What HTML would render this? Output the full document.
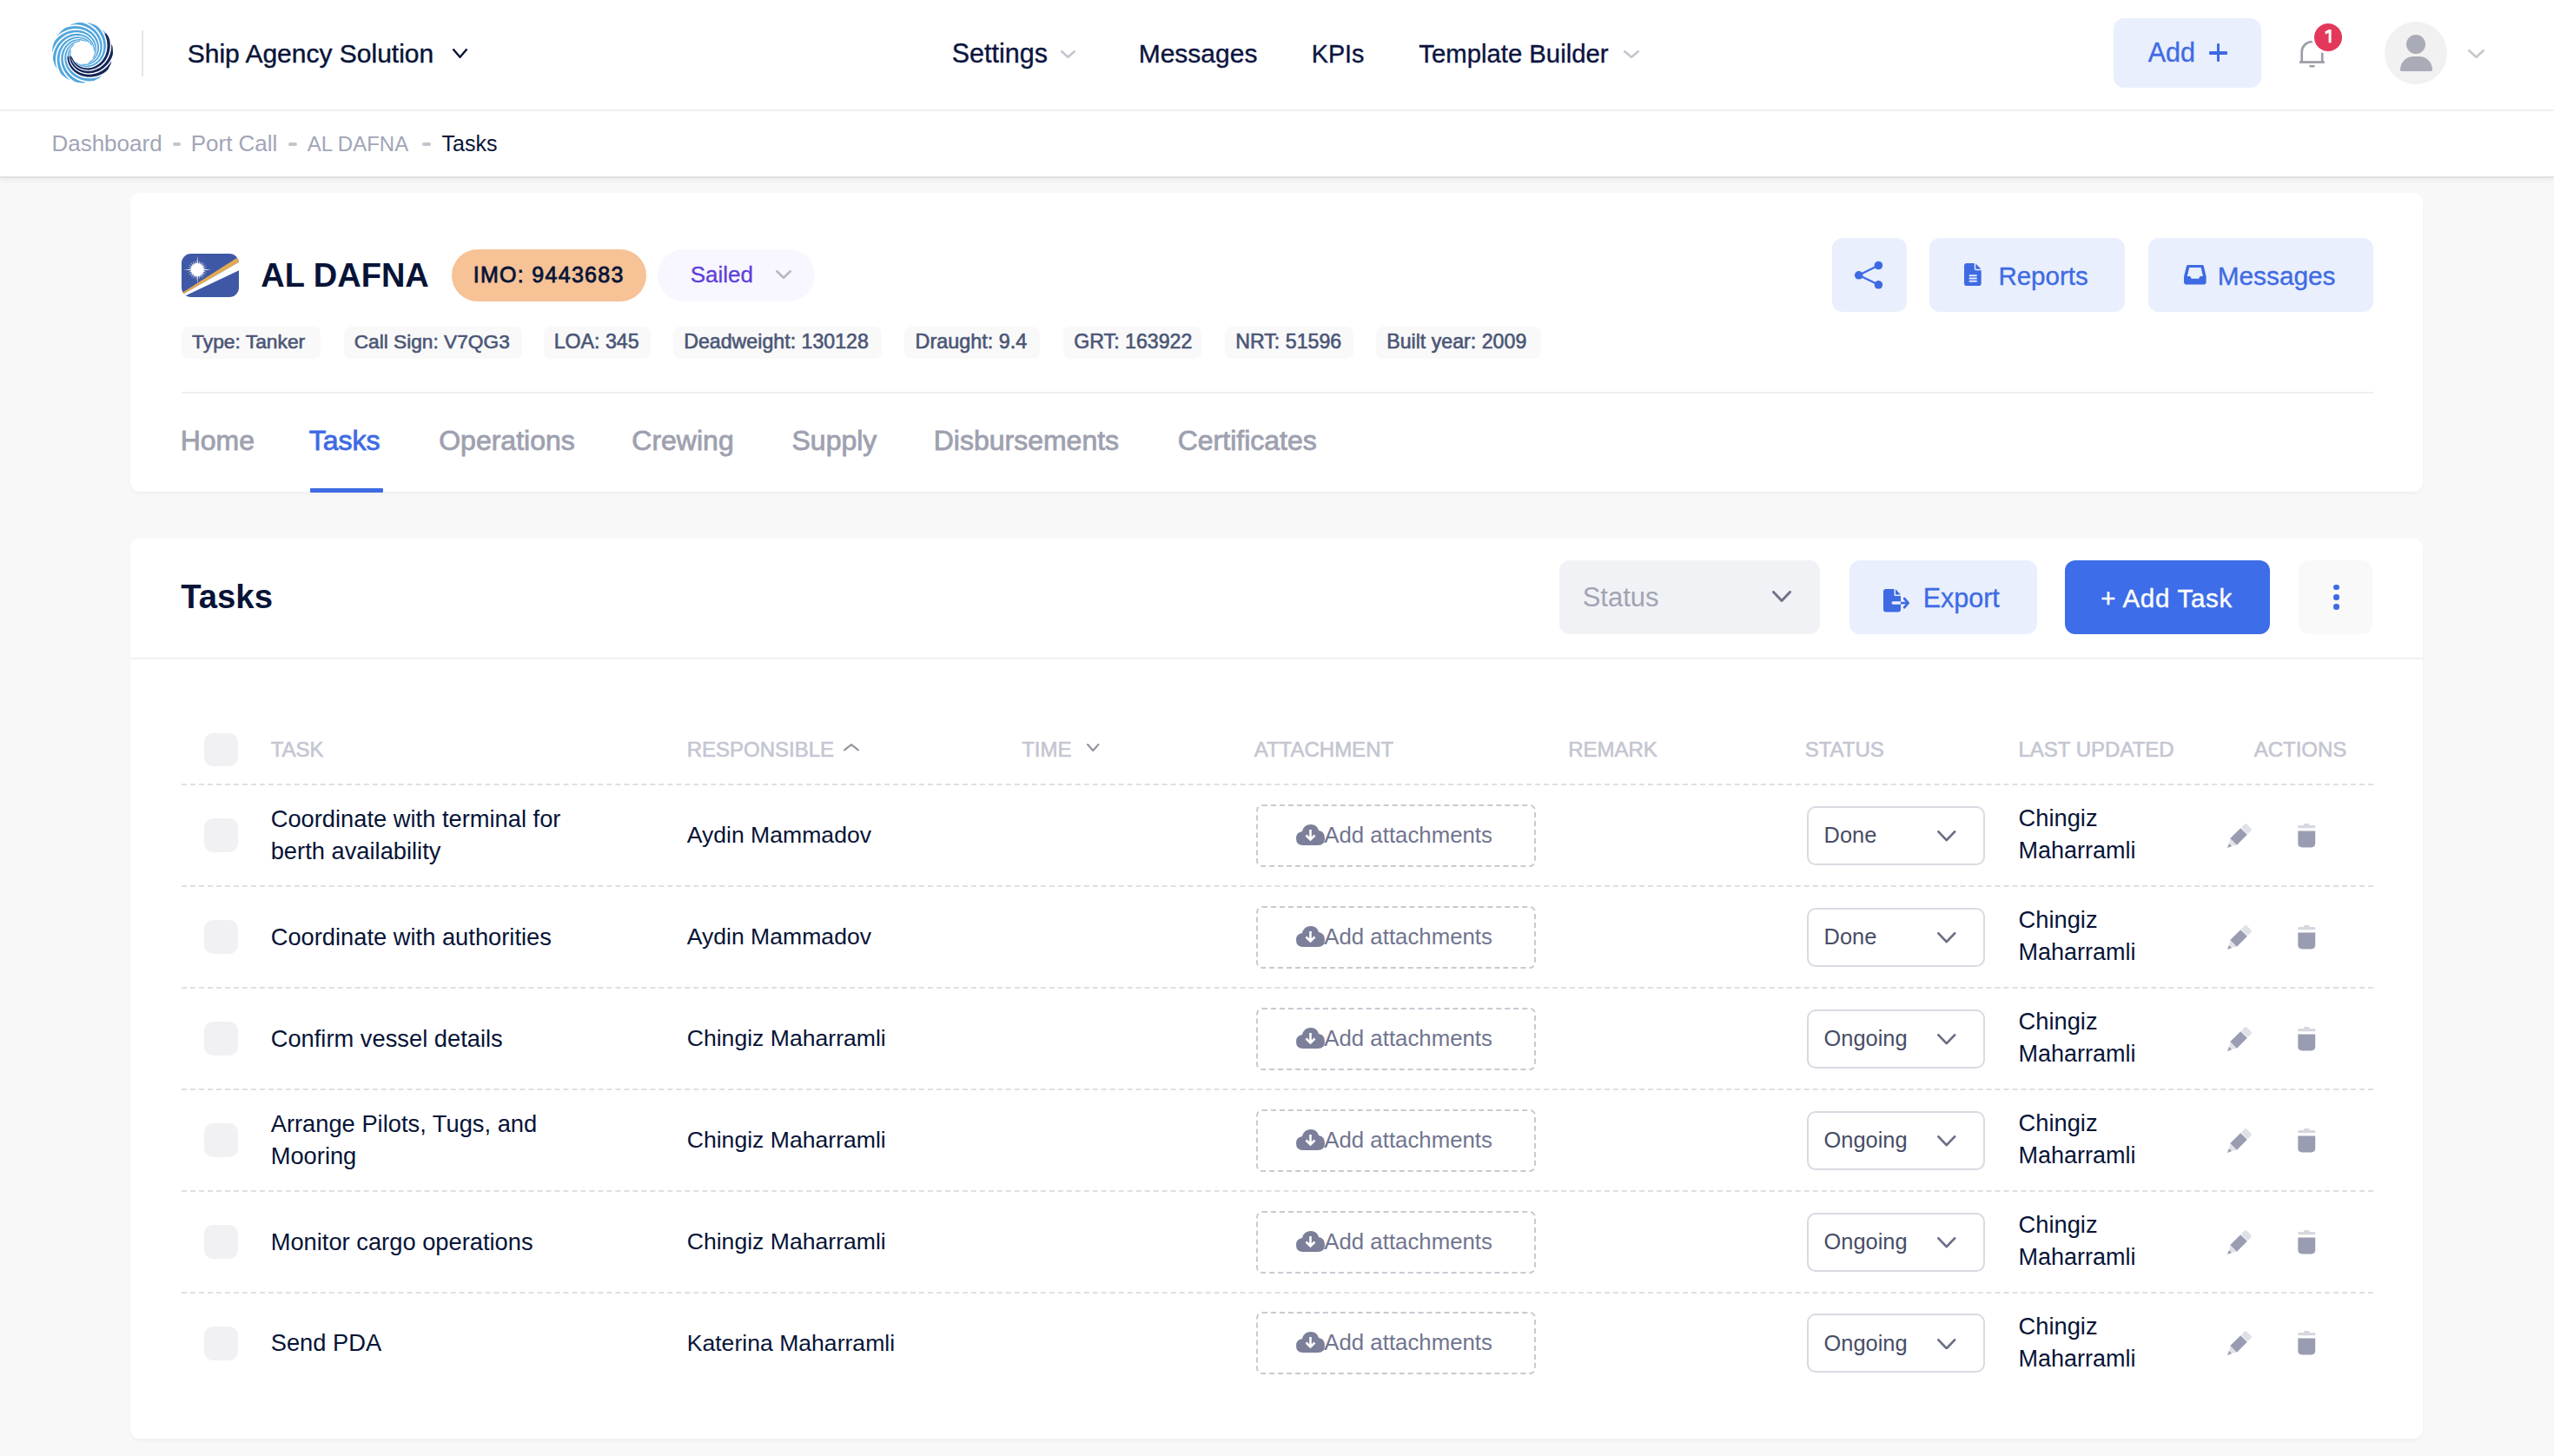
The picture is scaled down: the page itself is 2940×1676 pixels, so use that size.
<!DOCTYPE html><html><head><meta charset="utf-8"><style>
html,body{margin:0;padding:0;}
body{width:2940px;height:1676px;overflow:hidden;position:relative;background:#f8f8f8;font-family:"Liberation Sans",sans-serif;}
.a{position:absolute;box-sizing:border-box;}
.t{position:absolute;white-space:nowrap;line-height:1;}
</style></head><body>
<div class="a" style="left:0.0px;top:0.0px;width:2940.0px;height:127.0px;background:#fff;"></div>
<div class="a" style="left:0.0px;top:126.0px;width:2940.0px;height:2.0px;background:#efeff2;"></div>
<div class="a" style="left:0.0px;top:128.0px;width:2940.0px;height:76.5px;background:#fff;box-shadow:0 3px 6px rgba(0,0,0,0.05);border-bottom:2px solid #dfdfe2;"></div>
<svg class="a" style="left:60.0px;top:25.0px" width="70" height="71" viewBox="0 0 70 71"><defs><clipPath id="lgc"><circle cx="35" cy="35.5" r="35"/></clipPath><clipPath id="lgw"><path d="M35.00,35.50 L80.96,-3.07 L85.22,2.68 L88.77,8.88 L91.56,15.47 L93.54,22.34 L94.69,29.40 L94.99,36.55 L94.44,43.68 L93.04,50.69 L90.83,57.49 L87.81,63.98 L84.05,70.06 L79.59,75.65 L74.50,80.67 L68.84,85.05 L62.70,88.72 L56.18,91.64 L49.35,93.76 L42.31,95.05 L35.17,95.50 L28.03,95.09 L20.99,93.84 L14.15,91.76 L7.61,88.88 L1.45,85.24 L-4.23,80.90 L-9.35,75.91 L-13.85,70.34 L-17.65,64.28 L-20.70,57.81 L-22.96,51.03Z"/></clipPath></defs><g clip-path="url(#lgc)"><path d="M48.15,34.35 L48.05,33.16 L47.91,31.96 L47.71,30.74 L47.43,29.52 L47.05,28.29 L46.59,27.07 L46.01,25.85 L45.33,24.65 L44.53,23.48 L43.62,22.35 L42.59,21.27 L41.44,20.25 L40.18,19.31 L38.80,18.45 L37.30,17.70 L35.71,17.07 L34.02,16.56 L32.24,16.20 L30.38,15.99 L28.46,15.95 L26.49,16.09 L24.49,16.42 L22.47,16.94 L20.45,17.66 L18.46,18.59 L16.51,19.73 L14.62,21.08 L12.81,22.64 L11.12,24.40 L9.56,26.36 L8.14,28.52 L6.91,30.85 L5.87,33.35 L5.04,36.00 L4.45,38.78 L4.11,41.67 L4.04,44.65 L4.26,47.70 L4.76,50.79 L5.57,53.89 L2.52,55.80 L1.61,52.39 L1.03,48.98 L0.78,45.62 L0.84,42.33 L1.20,39.13 L1.83,36.05 L2.73,33.12 L3.87,30.35 L5.23,27.76 L6.78,25.37 L8.50,23.19 L10.38,21.23 L12.37,19.49 L14.46,17.99 L16.62,16.72 L18.83,15.68 L21.07,14.87 L23.32,14.29 L25.54,13.93 L27.73,13.77 L29.86,13.82 L31.93,14.05 L33.91,14.46 L35.79,15.03 L37.56,15.74 L39.21,16.59 L40.74,17.55 L42.14,18.61 L43.40,19.75 L44.53,20.97 L45.52,22.24 L46.38,23.55 L47.11,24.89 L47.71,26.25 L48.19,27.61 L48.56,28.97 L48.83,30.32 L49.00,31.66 L49.10,32.97 L49.15,34.26Z" fill="#52a6dd"/><path d="M46.68,41.64 L47.24,40.58 L47.78,39.50 L48.26,38.37 L48.69,37.19 L49.04,35.95 L49.31,34.67 L49.48,33.34 L49.55,31.96 L49.52,30.54 L49.36,29.10 L49.08,27.63 L48.67,26.15 L48.11,24.67 L47.41,23.21 L46.56,21.77 L45.56,20.37 L44.41,19.04 L43.11,17.77 L41.66,16.59 L40.07,15.52 L38.33,14.57 L36.47,13.76 L34.49,13.11 L32.41,12.63 L30.22,12.33 L27.97,12.24 L25.65,12.35 L23.29,12.69 L20.91,13.25 L18.53,14.06 L16.18,15.11 L13.88,16.40 L11.66,17.94 L9.53,19.72 L7.53,21.74 L5.68,23.99 L4.01,26.47 L2.54,29.14 L1.30,32.02 L0.30,35.06 L-3.30,35.01 L-2.22,31.65 L-0.87,28.48 L0.74,25.51 L2.57,22.77 L4.60,20.28 L6.80,18.03 L9.14,16.05 L11.60,14.33 L14.14,12.89 L16.74,11.72 L19.37,10.82 L22.00,10.18 L24.62,9.80 L27.19,9.66 L29.69,9.76 L32.12,10.09 L34.44,10.62 L36.64,11.34 L38.71,12.24 L40.63,13.29 L42.40,14.48 L44.01,15.80 L45.46,17.21 L46.73,18.70 L47.83,20.26 L48.77,21.87 L49.53,23.50 L50.13,25.15 L50.58,26.79 L50.87,28.43 L51.02,30.03 L51.03,31.60 L50.92,33.12 L50.69,34.59 L50.36,36.00 L49.94,37.34 L49.43,38.62 L48.86,39.84 L48.23,40.99 L47.57,42.11Z" fill="#52a6dd"/><path d="M41.51,46.98 L42.55,46.40 L43.59,45.77 L44.61,45.08 L45.60,44.32 L46.56,43.47 L47.48,42.54 L48.35,41.51 L49.16,40.39 L49.89,39.18 L50.54,37.88 L51.10,36.49 L51.55,35.02 L51.88,33.48 L52.08,31.87 L52.15,30.20 L52.06,28.49 L51.82,26.74 L51.41,24.97 L50.82,23.19 L50.06,21.43 L49.12,19.70 L47.99,18.01 L46.68,16.39 L45.18,14.86 L43.51,13.43 L41.66,12.13 L39.65,10.97 L37.48,9.98 L35.17,9.17 L32.74,8.56 L30.20,8.17 L27.56,8.01 L24.86,8.11 L22.10,8.46 L19.33,9.07 L16.56,9.97 L13.81,11.14 L11.13,12.60 L8.53,14.35 L6.05,16.37 L3.05,14.39 L5.77,12.14 L8.62,10.20 L11.58,8.58 L14.60,7.26 L17.66,6.26 L20.72,5.56 L23.76,5.16 L26.76,5.04 L29.67,5.20 L32.49,5.62 L35.19,6.28 L37.76,7.17 L40.16,8.26 L42.40,9.54 L44.45,10.98 L46.31,12.56 L47.98,14.26 L49.44,16.06 L50.69,17.93 L51.74,19.86 L52.59,21.82 L53.23,23.80 L53.69,25.76 L53.95,27.71 L54.04,29.62 L53.95,31.47 L53.71,33.26 L53.33,34.97 L52.81,36.60 L52.17,38.13 L51.43,39.56 L50.60,40.89 L49.68,42.11 L48.69,43.22 L47.65,44.22 L46.57,45.13 L45.45,45.93 L44.31,46.64 L43.16,47.27 L42.00,47.85Z" fill="#52a6dd"/><path d="M34.27,48.68 L35.46,48.75 L36.67,48.79 L37.90,48.76 L39.15,48.65 L40.42,48.46 L41.70,48.17 L42.98,47.77 L44.27,47.27 L45.54,46.65 L46.79,45.91 L48.01,45.04 L49.18,44.05 L50.29,42.93 L51.34,41.68 L52.29,40.31 L53.15,38.82 L53.89,37.22 L54.50,35.51 L54.97,33.70 L55.28,31.81 L55.42,29.84 L55.38,27.81 L55.15,25.74 L54.73,23.64 L54.09,21.53 L53.24,19.44 L52.17,17.38 L50.89,15.37 L49.38,13.44 L47.66,11.62 L45.73,9.91 L43.60,8.36 L41.28,6.97 L38.77,5.78 L36.10,4.80 L33.29,4.05 L30.34,3.56 L27.30,3.33 L24.17,3.40 L20.99,3.76 L19.53,0.46 L23.04,0.05 L26.49,-0.04 L29.85,0.19 L33.11,0.71 L36.22,1.52 L39.18,2.59 L41.95,3.90 L44.53,5.42 L46.90,7.13 L49.05,9.01 L50.96,11.03 L52.63,13.16 L54.07,15.38 L55.26,17.66 L56.21,19.98 L56.92,22.32 L57.40,24.65 L57.66,26.95 L57.70,29.21 L57.54,31.40 L57.19,33.50 L56.67,35.51 L55.98,37.41 L55.15,39.19 L54.19,40.84 L53.12,42.36 L51.95,43.73 L50.70,44.97 L49.39,46.05 L48.03,47.00 L46.63,47.80 L45.21,48.46 L43.78,48.99 L42.35,49.40 L40.93,49.68 L39.53,49.85 L38.16,49.92 L36.81,49.91 L35.50,49.81 L34.21,49.68Z" fill="#52a6dd"/><path d="M27.26,46.19 L28.22,46.90 L29.22,47.58 L30.27,48.22 L31.38,48.81 L32.55,49.33 L33.79,49.78 L35.08,50.14 L36.43,50.41 L37.84,50.58 L39.29,50.63 L40.78,50.56 L42.31,50.36 L43.85,50.02 L45.40,49.53 L46.94,48.90 L48.47,48.11 L49.96,47.16 L51.40,46.05 L52.77,44.78 L54.05,43.36 L55.24,41.78 L56.30,40.05 L57.23,38.18 L58.01,36.19 L58.61,34.07 L59.03,31.85 L59.24,29.54 L59.25,27.16 L59.02,24.72 L58.57,22.25 L57.86,19.78 L56.91,17.31 L55.70,14.89 L54.24,12.53 L52.53,10.27 L50.56,8.12 L48.35,6.11 L45.91,4.27 L43.25,2.64 L40.37,1.22 L40.93,-2.34 L44.11,-0.79 L47.05,1.00 L49.76,3.01 L52.21,5.21 L54.40,7.58 L56.30,10.07 L57.93,12.67 L59.28,15.35 L60.35,18.07 L61.14,20.81 L61.66,23.54 L61.91,26.24 L61.92,28.88 L61.69,31.44 L61.23,33.91 L60.57,36.26 L59.71,38.48 L58.68,40.56 L57.50,42.48 L56.18,44.23 L54.75,45.82 L53.22,47.22 L51.62,48.45 L49.96,49.50 L48.26,50.37 L46.54,51.07 L44.81,51.59 L43.09,51.95 L41.40,52.16 L39.74,52.22 L38.13,52.13 L36.58,51.92 L35.09,51.60 L33.67,51.16 L32.32,50.64 L31.05,50.02 L29.86,49.34 L28.74,48.60 L27.68,47.81 L26.67,47.00Z" fill="#52a6dd"/><path d="M22.71,40.31 L23.14,41.42 L23.61,42.54 L24.15,43.65 L24.76,44.74 L25.46,45.81 L26.26,46.86 L27.15,47.86 L28.14,48.82 L29.24,49.72 L30.43,50.55 L31.73,51.29 L33.12,51.95 L34.60,52.50 L36.16,52.93 L37.80,53.23 L39.51,53.39 L41.28,53.39 L43.09,53.24 L44.93,52.92 L46.78,52.41 L48.63,51.72 L50.46,50.85 L52.25,49.78 L53.98,48.52 L55.63,47.06 L57.19,45.42 L58.62,43.59 L59.91,41.59 L61.04,39.42 L61.99,37.10 L62.73,34.63 L63.26,32.05 L63.56,29.36 L63.60,26.58 L63.39,23.75 L62.90,20.88 L62.12,17.99 L61.06,15.13 L59.70,12.31 L58.05,9.57 L60.45,6.88 L62.28,9.89 L63.79,12.99 L64.98,16.15 L65.85,19.33 L66.41,22.50 L66.67,25.63 L66.63,28.70 L66.32,31.67 L65.75,34.54 L64.93,37.27 L63.89,39.85 L62.65,42.26 L61.23,44.48 L59.64,46.52 L57.93,48.34 L56.09,49.96 L54.17,51.37 L52.19,52.56 L50.15,53.53 L48.10,54.30 L46.04,54.86 L43.99,55.21 L41.98,55.38 L40.01,55.37 L38.11,55.18 L36.29,54.83 L34.55,54.34 L32.91,53.72 L31.38,52.97 L29.95,52.13 L28.64,51.19 L27.45,50.17 L26.37,49.09 L25.41,47.96 L24.56,46.78 L23.83,45.58 L23.19,44.36 L22.65,43.13 L22.19,41.90 L21.78,40.67Z" fill="#52a6dd"/><path d="M22.06,32.90 L21.82,34.07 L21.61,35.26 L21.46,36.48 L21.39,37.74 L21.40,39.02 L21.51,40.33 L21.72,41.66 L22.03,43.00 L22.47,44.35 L23.02,45.69 L23.71,47.02 L24.52,48.32 L25.47,49.58 L26.56,50.79 L27.77,51.93 L29.13,52.99 L30.61,53.95 L32.21,54.80 L33.94,55.52 L35.77,56.10 L37.70,56.52 L39.71,56.77 L41.79,56.84 L43.93,56.71 L46.11,56.38 L48.30,55.84 L50.49,55.08 L52.66,54.09 L54.79,52.88 L56.84,51.43 L58.80,49.77 L60.64,47.88 L62.35,45.77 L63.88,43.46 L65.23,40.96 L66.37,38.28 L67.28,35.44 L67.94,32.45 L68.32,29.35 L68.42,26.15 L71.88,25.18 L71.80,28.71 L71.39,32.13 L70.69,35.43 L69.70,38.57 L68.46,41.54 L66.98,44.32 L65.29,46.88 L63.42,49.22 L61.39,51.32 L59.22,53.17 L56.95,54.78 L54.61,56.13 L52.20,57.24 L49.78,58.09 L47.34,58.70 L44.93,59.07 L42.55,59.22 L40.24,59.14 L38.00,58.86 L35.85,58.40 L33.82,57.75 L31.90,56.95 L30.12,56.00 L28.48,54.92 L26.98,53.74 L25.63,52.46 L24.44,51.11 L23.40,49.70 L22.51,48.24 L21.77,46.76 L21.17,45.26 L20.72,43.76 L20.40,42.27 L20.20,40.80 L20.12,39.35 L20.15,37.94 L20.27,36.57 L20.48,35.24 L20.76,33.96 L21.08,32.70Z" fill="#52a6dd"/><path d="M25.52,26.32 L24.68,27.17 L23.87,28.06 L23.08,29.01 L22.34,30.02 L21.66,31.11 L21.04,32.27 L20.50,33.50 L20.04,34.80 L19.67,36.16 L19.42,37.60 L19.27,39.08 L19.25,40.62 L19.37,42.19 L19.63,43.80 L20.04,45.42 L20.60,47.04 L21.33,48.65 L22.22,50.23 L23.28,51.77 L24.51,53.24 L25.91,54.64 L27.46,55.94 L29.18,57.12 L31.05,58.17 L33.06,59.07 L35.19,59.80 L37.45,60.35 L39.81,60.69 L42.25,60.81 L44.76,60.71 L47.31,60.37 L49.88,59.78 L52.45,58.93 L54.99,57.82 L57.48,56.44 L59.89,54.80 L62.19,52.90 L64.35,50.74 L66.36,48.34 L68.17,45.70 L71.61,46.76 L69.63,49.68 L67.43,52.34 L65.06,54.74 L62.53,56.85 L59.88,58.67 L57.14,60.21 L54.33,61.45 L51.49,62.40 L48.65,63.07 L45.82,63.46 L43.05,63.59 L40.34,63.46 L37.72,63.09 L35.22,62.49 L32.84,61.69 L30.61,60.70 L28.53,59.53 L26.62,58.22 L24.89,56.78 L23.34,55.22 L21.98,53.58 L20.80,51.87 L19.81,50.11 L19.01,48.31 L18.39,46.51 L17.95,44.70 L17.68,42.92 L17.56,41.17 L17.60,39.46 L17.78,37.82 L18.09,36.23 L18.52,34.73 L19.05,33.30 L19.69,31.95 L20.40,30.70 L21.19,29.52 L22.03,28.44 L22.93,27.44 L23.86,26.50 L24.80,25.62Z" fill="#52a6dd"/><path d="M31.99,22.65 L30.82,22.92 L29.65,23.22 L28.48,23.60 L27.31,24.05 L26.15,24.59 L25.00,25.23 L23.88,25.97 L22.79,26.82 L21.75,27.77 L20.76,28.84 L19.83,30.01 L18.99,31.29 L18.23,32.68 L17.58,34.17 L17.05,35.75 L16.65,37.42 L16.39,39.17 L16.29,40.98 L16.35,42.85 L16.58,44.76 L17.00,46.68 L17.61,48.62 L18.41,50.54 L19.42,52.44 L20.62,54.28 L22.02,56.05 L23.63,57.73 L25.43,59.29 L27.41,60.72 L29.58,61.98 L31.91,63.08 L34.39,63.97 L37.02,64.64 L39.76,65.08 L42.59,65.27 L45.50,65.19 L48.47,64.84 L51.45,64.19 L54.44,63.25 L57.39,62.01 L59.71,64.76 L56.47,66.15 L53.18,67.20 L49.89,67.93 L46.62,68.34 L43.40,68.44 L40.26,68.25 L37.23,67.78 L34.33,67.05 L31.57,66.07 L28.99,64.87 L26.58,63.48 L24.38,61.91 L22.37,60.18 L20.59,58.32 L19.02,56.36 L17.68,54.32 L16.56,52.22 L15.67,50.08 L14.99,47.93 L14.53,45.79 L14.27,43.67 L14.21,41.59 L14.33,39.58 L14.62,37.64 L15.08,35.78 L15.68,34.02 L16.41,32.38 L17.27,30.84 L18.22,29.43 L19.26,28.14 L20.38,26.97 L21.55,25.94 L22.78,25.03 L24.03,24.24 L25.32,23.56 L26.61,23.00 L27.91,22.55 L29.20,22.19 L30.49,21.91 L31.76,21.67Z" fill="#52a6dd"/><path d="M39.42,23.06 L38.29,22.66 L37.14,22.28 L35.95,21.96 L34.72,21.71 L33.45,21.54 L32.14,21.46 L30.80,21.47 L29.42,21.60 L28.03,21.83 L26.62,22.19 L25.21,22.68 L23.80,23.30 L22.42,24.06 L21.07,24.97 L19.77,26.01 L18.53,27.20 L17.36,28.53 L16.30,30.00 L15.34,31.60 L14.50,33.33 L13.81,35.18 L13.28,37.14 L12.91,39.19 L12.73,41.32 L12.75,43.52 L12.97,45.77 L13.42,48.05 L14.09,50.34 L14.99,52.61 L16.12,54.85 L17.49,57.03 L19.10,59.12 L20.94,61.11 L23.01,62.96 L25.29,64.65 L27.78,66.16 L30.47,67.46 L33.33,68.53 L36.35,69.36 L39.50,69.91 L39.97,73.48 L36.49,72.89 L33.15,72.00 L29.99,70.83 L27.02,69.41 L24.26,67.76 L21.72,65.90 L19.43,63.86 L17.38,61.68 L15.59,59.37 L14.06,56.96 L12.79,54.49 L11.79,51.97 L11.04,49.44 L10.54,46.91 L10.28,44.41 L10.26,41.97 L10.45,39.60 L10.85,37.32 L11.45,35.14 L12.22,33.09 L13.14,31.16 L14.21,29.38 L15.41,27.75 L16.70,26.28 L18.09,24.97 L19.55,23.81 L21.05,22.82 L22.60,21.99 L24.17,21.32 L25.74,20.80 L27.31,20.42 L28.86,20.19 L30.38,20.08 L31.86,20.10 L33.31,20.22 L34.70,20.45 L36.04,20.77 L37.32,21.17 L38.55,21.63 L39.75,22.12Z" fill="#52a6dd"/><path d="M45.44,27.42 L44.71,26.47 L43.95,25.54 L43.12,24.63 L42.22,23.75 L41.24,22.92 L40.19,22.14 L39.05,21.43 L37.83,20.79 L36.52,20.23 L35.14,19.78 L33.69,19.42 L32.17,19.19 L30.60,19.08 L28.98,19.11 L27.31,19.28 L25.63,19.61 L23.93,20.10 L22.24,20.76 L20.57,21.59 L18.93,22.59 L17.35,23.77 L15.84,25.13 L14.42,26.66 L13.12,28.36 L11.94,30.22 L10.92,32.23 L10.06,34.39 L9.38,36.68 L8.91,39.07 L8.66,41.57 L8.63,44.14 L8.85,46.78 L9.33,49.44 L10.07,52.11 L11.07,54.77 L12.35,57.39 L13.91,59.94 L15.73,62.39 L17.83,64.71 L20.19,66.88 L18.65,70.13 L16.04,67.76 L13.71,65.21 L11.68,62.52 L9.95,59.71 L8.52,56.83 L7.39,53.89 L6.56,50.94 L6.02,47.99 L5.77,45.08 L5.78,42.23 L6.05,39.47 L6.57,36.80 L7.31,34.27 L8.25,31.87 L9.38,29.63 L10.69,27.57 L12.13,25.68 L13.70,23.97 L15.38,22.47 L17.14,21.15 L18.96,20.04 L20.82,19.12 L22.70,18.39 L24.59,17.85 L26.47,17.50 L28.32,17.31 L30.12,17.30 L31.87,17.43 L33.55,17.71 L35.16,18.13 L36.68,18.66 L38.11,19.30 L39.45,20.03 L40.69,20.85 L41.83,21.73 L42.88,22.68 L43.83,23.67 L44.70,24.70 L45.49,25.75 L46.23,26.81Z" fill="#52a6dd"/><g clip-path="url(#lgw)"><path d="M22.71,40.31 L23.14,41.42 L23.61,42.54 L24.15,43.65 L24.76,44.74 L25.46,45.81 L26.26,46.86 L27.15,47.86 L28.14,48.82 L29.24,49.72 L30.43,50.55 L31.73,51.29 L33.12,51.95 L34.60,52.50 L36.16,52.93 L37.80,53.23 L39.51,53.39 L41.28,53.39 L43.09,53.24 L44.93,52.92 L46.78,52.41 L48.63,51.72 L50.46,50.85 L52.25,49.78 L53.98,48.52 L55.63,47.06 L57.19,45.42 L58.62,43.59 L59.91,41.59 L61.04,39.42 L61.99,37.10 L62.73,34.63 L63.26,32.05 L63.56,29.36 L63.60,26.58 L63.39,23.75 L62.90,20.88 L62.12,17.99 L61.06,15.13 L59.70,12.31 L58.05,9.57 L60.45,6.88 L62.28,9.89 L63.79,12.99 L64.98,16.15 L65.85,19.33 L66.41,22.50 L66.67,25.63 L66.63,28.70 L66.32,31.67 L65.75,34.54 L64.93,37.27 L63.89,39.85 L62.65,42.26 L61.23,44.48 L59.64,46.52 L57.93,48.34 L56.09,49.96 L54.17,51.37 L52.19,52.56 L50.15,53.53 L48.10,54.30 L46.04,54.86 L43.99,55.21 L41.98,55.38 L40.01,55.37 L38.11,55.18 L36.29,54.83 L34.55,54.34 L32.91,53.72 L31.38,52.97 L29.95,52.13 L28.64,51.19 L27.45,50.17 L26.37,49.09 L25.41,47.96 L24.56,46.78 L23.83,45.58 L23.19,44.36 L22.65,43.13 L22.19,41.90 L21.78,40.67Z" fill="#1c2353"/><path d="M22.06,32.90 L21.82,34.07 L21.61,35.26 L21.46,36.48 L21.39,37.74 L21.40,39.02 L21.51,40.33 L21.72,41.66 L22.03,43.00 L22.47,44.35 L23.02,45.69 L23.71,47.02 L24.52,48.32 L25.47,49.58 L26.56,50.79 L27.77,51.93 L29.13,52.99 L30.61,53.95 L32.21,54.80 L33.94,55.52 L35.77,56.10 L37.70,56.52 L39.71,56.77 L41.79,56.84 L43.93,56.71 L46.11,56.38 L48.30,55.84 L50.49,55.08 L52.66,54.09 L54.79,52.88 L56.84,51.43 L58.80,49.77 L60.64,47.88 L62.35,45.77 L63.88,43.46 L65.23,40.96 L66.37,38.28 L67.28,35.44 L67.94,32.45 L68.32,29.35 L68.42,26.15 L71.88,25.18 L71.80,28.71 L71.39,32.13 L70.69,35.43 L69.70,38.57 L68.46,41.54 L66.98,44.32 L65.29,46.88 L63.42,49.22 L61.39,51.32 L59.22,53.17 L56.95,54.78 L54.61,56.13 L52.20,57.24 L49.78,58.09 L47.34,58.70 L44.93,59.07 L42.55,59.22 L40.24,59.14 L38.00,58.86 L35.85,58.40 L33.82,57.75 L31.90,56.95 L30.12,56.00 L28.48,54.92 L26.98,53.74 L25.63,52.46 L24.44,51.11 L23.40,49.70 L22.51,48.24 L21.77,46.76 L21.17,45.26 L20.72,43.76 L20.40,42.27 L20.20,40.80 L20.12,39.35 L20.15,37.94 L20.27,36.57 L20.48,35.24 L20.76,33.96 L21.08,32.70Z" fill="#1c2353"/><path d="M25.52,26.32 L24.68,27.17 L23.87,28.06 L23.08,29.01 L22.34,30.02 L21.66,31.11 L21.04,32.27 L20.50,33.50 L20.04,34.80 L19.67,36.16 L19.42,37.60 L19.27,39.08 L19.25,40.62 L19.37,42.19 L19.63,43.80 L20.04,45.42 L20.60,47.04 L21.33,48.65 L22.22,50.23 L23.28,51.77 L24.51,53.24 L25.91,54.64 L27.46,55.94 L29.18,57.12 L31.05,58.17 L33.06,59.07 L35.19,59.80 L37.45,60.35 L39.81,60.69 L42.25,60.81 L44.76,60.71 L47.31,60.37 L49.88,59.78 L52.45,58.93 L54.99,57.82 L57.48,56.44 L59.89,54.80 L62.19,52.90 L64.35,50.74 L66.36,48.34 L68.17,45.70 L71.61,46.76 L69.63,49.68 L67.43,52.34 L65.06,54.74 L62.53,56.85 L59.88,58.67 L57.14,60.21 L54.33,61.45 L51.49,62.40 L48.65,63.07 L45.82,63.46 L43.05,63.59 L40.34,63.46 L37.72,63.09 L35.22,62.49 L32.84,61.69 L30.61,60.70 L28.53,59.53 L26.62,58.22 L24.89,56.78 L23.34,55.22 L21.98,53.58 L20.80,51.87 L19.81,50.11 L19.01,48.31 L18.39,46.51 L17.95,44.70 L17.68,42.92 L17.56,41.17 L17.60,39.46 L17.78,37.82 L18.09,36.23 L18.52,34.73 L19.05,33.30 L19.69,31.95 L20.40,30.70 L21.19,29.52 L22.03,28.44 L22.93,27.44 L23.86,26.50 L24.80,25.62Z" fill="#1c2353"/></g></g></svg>
<div class="a" style="left:163.0px;top:35.0px;width:2.0px;height:53.0px;background:#e4e5ea;"></div>
<div class="t" style="left:215.7px;top:47.0px;font-size:30px;color:#071437;-webkit-text-stroke:0.4px #071437;">Ship Agency Solution</div>
<svg class="a" style="left:520.5px;top:55.5px" width="17.0" height="11.0" viewBox="0 0 17.0 11.0"><path d="M1.2,1.2 L8.5,9.8 L15.8,1.2" fill="none" stroke="#071437" stroke-width="2.4" stroke-linecap="round" stroke-linejoin="round"/></svg>
<div class="t" style="left:1095.7px;top:46.2px;font-size:30.5px;color:#0b1440;-webkit-text-stroke:0.35px #0b1440;">Settings</div>
<svg class="a" style="left:1221.0px;top:58.0px" width="17" height="9" viewBox="0 0 17 9"><path d="M1.25,1.25 L8.5,7.75 L15.75,1.25" fill="none" stroke="#c3c5cf" stroke-width="2.5" stroke-linecap="round" stroke-linejoin="round"/></svg>
<div class="t" style="left:1310.7px;top:46.6px;font-size:30px;color:#0b1440;-webkit-text-stroke:0.35px #0b1440;">Messages</div>
<div class="t" style="left:1509.7px;top:47.6px;font-size:28.8px;color:#0b1440;-webkit-text-stroke:0.35px #0b1440;">KPIs</div>
<div class="t" style="left:1633.3px;top:47.2px;font-size:29.3px;color:#0b1440;-webkit-text-stroke:0.35px #0b1440;">Template Builder</div>
<svg class="a" style="left:1869.0px;top:58.0px" width="18" height="9" viewBox="0 0 18 9"><path d="M1.25,1.25 L9.0,7.75 L16.75,1.25" fill="none" stroke="#c3c5cf" stroke-width="2.5" stroke-linecap="round" stroke-linejoin="round"/></svg>
<div class="a" style="left:2433.0px;top:21.0px;width:170.0px;height:80.0px;background:#e9effd;border-radius:12px;"></div>
<div class="t" style="left:2472.7px;top:45.2px;font-size:30.5px;color:#3e6be3;-webkit-text-stroke:0.35px #3e6be3;">Add</div>
<div class="a" style="left:2543.0px;top:59.0px;width:21.0px;height:3.5px;background:#3e6be3;border-radius:1px;"></div>
<div class="a" style="left:2551.8px;top:50.0px;width:3.4px;height:21.0px;background:#3e6be3;border-radius:1px;"></div>
<svg class="a" style="left:2640.0px;top:40.0px" width="40" height="40" viewBox="0 0 40 40"><path d="M9.7,31.5 L9.7,19.75 A11.75,11.75 0 0 1 33.2,19.75 L33.2,31.5" fill="none" stroke="#9c9ea8" stroke-width="2.7"/><rect x="7" y="30.2" width="28.8" height="2.7" fill="#9c9ea8"/><path d="M18,35 L25,35 L24,37.6 L19,37.6 Z" fill="#9c9ea8"/></svg>
<div class="a" style="left:2661px;top:24px;width:38px;height:38px;border-radius:50%;background:#fff;"></div>
<div class="a" style="left:2664px;top:27px;width:32px;height:32px;border-radius:50%;background:#e3385a;"></div>
<svg class="a" style="left:2675.6px;top:33.6px" width="9" height="16" viewBox="0 0 9 16"><path d="M4.6,0 L7.6,0 L7.6,15.3 L4.6,15.3 L4.6,3.8 L1.1,5.4 L0.2,2.8 Z" fill="#fff"/></svg>
<div class="a" style="left:2745px;top:24.5px;width:72px;height:72px;border-radius:50%;background:#f1f1f2;"></div>
<div class="a" style="left:2770px;top:40px;width:22px;height:22px;border-radius:50%;background:#a9abb6;"></div>
<div class="a" style="left:2762.5px;top:65px;width:37px;height:17px;border-radius:18px 18px 2px 2px;background:#a9abb6;"></div>
<svg class="a" style="left:2841.0px;top:57.0px" width="19" height="10" viewBox="0 0 19 10"><path d="M1.25,1.25 L9.5,8.75 L17.75,1.25" fill="none" stroke="#c6c7cd" stroke-width="2.5" stroke-linecap="round" stroke-linejoin="round"/></svg>
<div class="t" style="left:59.4px;top:152.2px;font-size:26px;color:#a1a5b7;">Dashboard</div>
<div class="a" style="left:198.5px;top:164.0px;width:9.0px;height:3.5px;background:#c3c5cd;border-radius:2px;"></div>
<div class="t" style="left:219.7px;top:152.2px;font-size:26px;color:#a1a5b7;">Port Call</div>
<div class="a" style="left:332.0px;top:164.0px;width:9.5px;height:3.5px;background:#c3c5cd;border-radius:2px;"></div>
<div class="t" style="left:353.7px;top:153.9px;font-size:24px;color:#a1a5b7;">AL DAFNA</div>
<div class="a" style="left:486.0px;top:164.0px;width:9.5px;height:3.5px;background:#c3c5cd;border-radius:2px;"></div>
<div class="t" style="left:508.5px;top:153.0px;font-size:25px;color:#071437;">Tasks</div>
<div class="a" style="left:149.5px;top:222.0px;width:2639.5px;height:343.5px;background:#fff;border-radius:11px;box-shadow:0 3px 4px rgba(0,0,0,0.03);"></div>
<svg class="a" style="left:209.0px;top:292.0px" width="66" height="50" viewBox="0 0 66 50"><defs><clipPath id="fc"><rect x="0" y="0" width="66" height="50" rx="11"/></clipPath></defs>
<g clip-path="url(#fc)"><rect width="66" height="50" fill="#3f58a6"/>
<path d="M0,45.5 L66,3.5 L66,9.8 L0,47.8 Z" fill="#e3a94f"/><path d="M0,47.8 L66,9.8 L66,19.3 L0,50.5 Z" fill="#ffffff"/>
<g transform="translate(18.2,18.5)"><path d="M-1.3,0 L0,-16 L1.3,0 Z" fill="#fff" transform="rotate(0)"/><path d="M-1.3,0 L0,-11.5 L1.3,0 Z" fill="#fff" transform="rotate(15)"/><path d="M-1.3,0 L0,-11.5 L1.3,0 Z" fill="#fff" transform="rotate(30)"/><path d="M-1.3,0 L0,-11.5 L1.3,0 Z" fill="#fff" transform="rotate(45)"/><path d="M-1.3,0 L0,-11.5 L1.3,0 Z" fill="#fff" transform="rotate(60)"/><path d="M-1.3,0 L0,-11.5 L1.3,0 Z" fill="#fff" transform="rotate(75)"/><path d="M-1.3,0 L0,-16 L1.3,0 Z" fill="#fff" transform="rotate(90)"/><path d="M-1.3,0 L0,-11.5 L1.3,0 Z" fill="#fff" transform="rotate(105)"/><path d="M-1.3,0 L0,-11.5 L1.3,0 Z" fill="#fff" transform="rotate(120)"/><path d="M-1.3,0 L0,-11.5 L1.3,0 Z" fill="#fff" transform="rotate(135)"/><path d="M-1.3,0 L0,-11.5 L1.3,0 Z" fill="#fff" transform="rotate(150)"/><path d="M-1.3,0 L0,-11.5 L1.3,0 Z" fill="#fff" transform="rotate(165)"/><path d="M-1.3,0 L0,-16 L1.3,0 Z" fill="#fff" transform="rotate(180)"/><path d="M-1.3,0 L0,-11.5 L1.3,0 Z" fill="#fff" transform="rotate(195)"/><path d="M-1.3,0 L0,-11.5 L1.3,0 Z" fill="#fff" transform="rotate(210)"/><path d="M-1.3,0 L0,-11.5 L1.3,0 Z" fill="#fff" transform="rotate(225)"/><path d="M-1.3,0 L0,-11.5 L1.3,0 Z" fill="#fff" transform="rotate(240)"/><path d="M-1.3,0 L0,-11.5 L1.3,0 Z" fill="#fff" transform="rotate(255)"/><path d="M-1.3,0 L0,-16 L1.3,0 Z" fill="#fff" transform="rotate(270)"/><path d="M-1.3,0 L0,-11.5 L1.3,0 Z" fill="#fff" transform="rotate(285)"/><path d="M-1.3,0 L0,-11.5 L1.3,0 Z" fill="#fff" transform="rotate(300)"/><path d="M-1.3,0 L0,-11.5 L1.3,0 Z" fill="#fff" transform="rotate(315)"/><path d="M-1.3,0 L0,-11.5 L1.3,0 Z" fill="#fff" transform="rotate(330)"/><path d="M-1.3,0 L0,-11.5 L1.3,0 Z" fill="#fff" transform="rotate(345)"/><circle r="7.5" fill="#fff"/></g></g></svg>
<div class="t" style="left:300.3px;top:297.8px;font-size:38px;color:#071437;font-weight:700;">AL DAFNA</div>
<div class="a" style="left:520.0px;top:287.0px;width:224.0px;height:59.5px;background:#f6c296;border-radius:30px;"></div>
<div class="t" style="left:544.7px;top:303.8px;font-size:25px;color:#071437;-webkit-text-stroke:0.8px #071437;letter-spacing:1.3px;">IMO: 9443683</div>
<div class="a" style="left:757.0px;top:287.0px;width:181.0px;height:59.5px;background:#f8f6fe;border-radius:30px;"></div>
<div class="t" style="left:794.7px;top:303.0px;font-size:26px;color:#5b40d9;-webkit-text-stroke:0.3px #5b40d9;">Sailed</div>
<svg class="a" style="left:893.0px;top:311.0px" width="18" height="10" viewBox="0 0 18 10"><path d="M1.25,1.25 L9.0,8.75 L16.75,1.25" fill="none" stroke="#b5b7c3" stroke-width="2.5" stroke-linecap="round" stroke-linejoin="round"/></svg>
<div class="a" style="left:209.0px;top:376.0px;width:159.5px;height:37.0px;background:#f9f9fa;border-radius:8px;"></div>
<div class="t" style="left:221.1px;top:382.3px;font-size:22.8px;color:#4b5675;-webkit-text-stroke:0.6px #4b5675;">Type: Tanker</div>
<div class="a" style="left:395.5px;top:376.0px;width:205.5px;height:37.0px;background:#f9f9fa;border-radius:8px;"></div>
<div class="t" style="left:407.7px;top:382.4px;font-size:22.7px;color:#4b5675;-webkit-text-stroke:0.6px #4b5675;">Call Sign: V7QG3</div>
<div class="a" style="left:625.8px;top:376.0px;width:123.2px;height:37.0px;background:#f9f9fa;border-radius:8px;"></div>
<div class="t" style="left:637.7px;top:382.0px;font-size:23.2px;color:#4b5675;-webkit-text-stroke:0.6px #4b5675;">LOA: 345</div>
<div class="a" style="left:774.7px;top:376.0px;width:240.3px;height:37.0px;background:#f9f9fa;border-radius:8px;"></div>
<div class="t" style="left:787.2px;top:382.0px;font-size:23.2px;color:#4b5675;-webkit-text-stroke:0.6px #4b5675;">Deadweight: 130128</div>
<div class="a" style="left:1040.7px;top:376.0px;width:156.3px;height:37.0px;background:#f9f9fa;border-radius:8px;"></div>
<div class="t" style="left:1053.5px;top:381.8px;font-size:23.4px;color:#4b5675;-webkit-text-stroke:0.6px #4b5675;">Draught: 9.4</div>
<div class="a" style="left:1224.0px;top:376.0px;width:159.0px;height:37.0px;background:#f9f9fa;border-radius:8px;"></div>
<div class="t" style="left:1236.2px;top:382.0px;font-size:23.2px;color:#4b5675;-webkit-text-stroke:0.6px #4b5675;">GRT: 163922</div>
<div class="a" style="left:1410.0px;top:376.0px;width:147.6px;height:37.0px;background:#f9f9fa;border-radius:8px;"></div>
<div class="t" style="left:1422.2px;top:382.0px;font-size:23.2px;color:#4b5675;-webkit-text-stroke:0.6px #4b5675;">NRT: 51596</div>
<div class="a" style="left:1584.0px;top:376.0px;width:189.7px;height:37.0px;background:#f9f9fa;border-radius:8px;"></div>
<div class="t" style="left:1596.2px;top:382.0px;font-size:23.2px;color:#4b5675;-webkit-text-stroke:0.6px #4b5675;">Built year: 2009</div>
<div class="a" style="left:209.0px;top:451.0px;width:2523.0px;height:2.0px;background:#eff0f3;"></div>
<div class="t" style="left:207.7px;top:491.4px;font-size:32px;color:#9ea1b0;-webkit-text-stroke:0.85px #9ea1b0;">Home</div>
<div class="t" style="left:355.7px;top:491.4px;font-size:32px;color:#3e6be3;-webkit-text-stroke:0.85px #3e6be3;">Tasks</div>
<div class="t" style="left:505.2px;top:491.4px;font-size:32px;color:#9ea1b0;-webkit-text-stroke:0.85px #9ea1b0;">Operations</div>
<div class="t" style="left:727.3px;top:491.4px;font-size:32px;color:#9ea1b0;-webkit-text-stroke:0.85px #9ea1b0;">Crewing</div>
<div class="t" style="left:911.5px;top:491.4px;font-size:32px;color:#9ea1b0;-webkit-text-stroke:0.85px #9ea1b0;">Supply</div>
<div class="t" style="left:1074.7px;top:491.4px;font-size:32px;color:#9ea1b0;-webkit-text-stroke:0.85px #9ea1b0;">Disbursements</div>
<div class="t" style="left:1355.7px;top:491.4px;font-size:32px;color:#9ea1b0;-webkit-text-stroke:0.85px #9ea1b0;">Certificates</div>
<div class="a" style="left:357.0px;top:562.0px;width:84.0px;height:5.0px;background:#3e6be3;border-radius:1px;"></div>
<div class="a" style="left:2109.0px;top:274.0px;width:85.5px;height:85.0px;background:#e9effd;border-radius:12px;"></div>
<svg class="a" style="left:2133.0px;top:298.0px" width="36" height="38" viewBox="0 0 36 38"><circle cx="29.4" cy="7.5" r="4.8" fill="#3e6be3"/><circle cx="6.7" cy="18.8" r="4.8" fill="#3e6be3"/><circle cx="29.4" cy="29.8" r="4.8" fill="#3e6be3"/><path d="M29.4,7.5 L6.7,18.8 L29.4,29.8" fill="none" stroke="#3e6be3" stroke-width="2.3"/></svg>
<div class="a" style="left:2221.0px;top:274.0px;width:225.0px;height:85.0px;background:#e9effd;border-radius:12px;"></div>
<svg class="a" style="left:2261.0px;top:302.8px" width="20" height="27" viewBox="0 0 20 27"><path d="M3,0 L11.8,0 L11.8,6.3 Q11.8,8.3 13.8,8.3 L19.7,8.3 L19.7,23 Q19.7,26.1 16.6,26.1 L3,26.1 Q0,26.1 0,23 L0,3 Q0,0 3,0 Z" fill="#3e6be3"/><path d="M13.3,0.4 L19.5,6.8 L13.3,6.8 Z" fill="#3e6be3"/><rect x="5.7" y="13.3" width="9" height="1.9" fill="#e9effd"/><rect x="5.7" y="16.5" width="9" height="1.9" fill="#e9effd"/><rect x="5.7" y="19.7" width="9" height="1.9" fill="#e9effd"/></svg>
<div class="t" style="left:2300.4px;top:303.0px;font-size:29.5px;color:#3e6be3;-webkit-text-stroke:0.35px #3e6be3;">Reports</div>
<div class="a" style="left:2473.0px;top:274.0px;width:259.0px;height:85.0px;background:#e9effd;border-radius:12px;"></div>
<svg class="a" style="left:2514.0px;top:305.0px" width="26" height="23" viewBox="0 0 26 23"><path d="M4.6,0 L21.2,0 Q22.4,0 22.8,1.3 L25.6,13.2 L25.6,19.5 Q25.6,22.6 22.5,22.6 L3.1,22.6 Q0,22.6 0,19.5 L0,13.2 L3,1.3 Q3.4,0 4.6,0 Z" fill="#3e6be3"/><path d="M6.2,3 L19.6,3 L21.9,13 L19.2,13 Q18.4,13 17.9,14 L17.2,15.8 L8.6,15.8 L7.9,14 Q7.4,13 6.6,13 L3.8,13 Z" fill="#e9effd"/></svg>
<div class="t" style="left:2552.7px;top:302.8px;font-size:29.8px;color:#3e6be3;-webkit-text-stroke:0.35px #3e6be3;">Messages</div>
<div class="a" style="left:149.5px;top:619.5px;width:2639.5px;height:1036.5px;background:#fff;border-radius:11px;box-shadow:0 3px 4px rgba(0,0,0,0.03);"></div>
<div class="t" style="left:208.2px;top:668.4px;font-size:38.3px;color:#071437;font-weight:700;">Tasks</div>
<div class="a" style="left:1794.6px;top:644.5px;width:300.4px;height:85.5px;background:#f1f2f5;border-radius:12px;"></div>
<div class="t" style="left:1821.7px;top:672.4px;font-size:31px;color:#a0a4b3;">Status</div>
<svg class="a" style="left:2040.0px;top:680.0px" width="22" height="13" viewBox="0 0 22 13"><path d="M1.5,1.5 L11.0,11.5 L20.5,1.5" fill="none" stroke="#6f7388" stroke-width="3" stroke-linecap="round" stroke-linejoin="round"/></svg>
<div class="a" style="left:2128.5px;top:644.5px;width:216.5px;height:85.5px;background:#e9effd;border-radius:12px;"></div>
<svg class="a" style="left:2168.0px;top:678.0px" width="31" height="27" viewBox="0 0 31 27"><path d="M3,0 L12.5,0 L12.5,7 Q12.5,8 13.5,8 L20,8 L20,23.5 Q20,26.5 17,26.5 L3,26.5 Q0,26.5 0,23.5 L0,3 Q0,0 3,0 Z" fill="#3e6be3"/><path d="M14,0.3 L20,6.5 L14,6.5 Z" fill="#3e6be3"/><rect x="9.5" y="14.3" width="11" height="3.4" rx="1.7" fill="#e9effd"/><rect x="20" y="14.8" width="8" height="2.6" fill="#3e6be3"/><path d="M24.2,11 L28.6,16.1 L24.2,21.2" fill="none" stroke="#3e6be3" stroke-width="2.8" stroke-linecap="round" stroke-linejoin="round"/></svg>
<div class="t" style="left:2213.7px;top:672.8px;font-size:30.5px;color:#3e6be3;-webkit-text-stroke:0.35px #3e6be3;">Export</div>
<div class="a" style="left:2377.0px;top:644.5px;width:236.0px;height:85.5px;background:#3d6de8;border-radius:12px;"></div>
<div class="t" style="left:2418.3px;top:673.6px;font-size:29.5px;color:#fff;-webkit-text-stroke:0.4px #fff;letter-spacing:0.7px;">+ Add Task</div>
<div class="a" style="left:2645.7px;top:644.5px;width:85.3px;height:85.5px;background:#f9f9fa;border-radius:12px;"></div>
<div class="a" style="left:2686.3999999999996px;top:672.6px;width:6.6px;height:6.6px;border-radius:50%;background:#3e6be3;"></div>
<div class="a" style="left:2686.3999999999996px;top:684.1px;width:6.6px;height:6.6px;border-radius:50%;background:#3e6be3;"></div>
<div class="a" style="left:2686.3999999999996px;top:695.3000000000001px;width:6.6px;height:6.6px;border-radius:50%;background:#3e6be3;"></div>
<div class="a" style="left:149.5px;top:757.0px;width:2639.5px;height:2.0px;background:#eff0f3;"></div>
<div class="a" style="left:235.0px;top:843.5px;width:39.0px;height:38.0px;background:#f1f1f4;border-radius:10px;"></div>
<div class="t" style="left:311.7px;top:850.9px;font-size:24.0px;color:#c4c6d2;-webkit-text-stroke:0.6px #c4c6d2;">TASK</div>
<div class="t" style="left:790.7px;top:850.9px;font-size:24.0px;color:#c4c6d2;-webkit-text-stroke:0.6px #c4c6d2;">RESPONSIBLE</div>
<div class="t" style="left:1176.2px;top:850.9px;font-size:24.0px;color:#c4c6d2;-webkit-text-stroke:0.6px #c4c6d2;">TIME</div>
<div class="t" style="left:1443.7px;top:850.9px;font-size:24.0px;color:#c4c6d2;-webkit-text-stroke:0.6px #c4c6d2;">ATTACHMENT</div>
<div class="t" style="left:1805.2px;top:850.9px;font-size:24.0px;color:#c4c6d2;-webkit-text-stroke:0.6px #c4c6d2;">REMARK</div>
<div class="t" style="left:2077.7px;top:850.9px;font-size:24.0px;color:#c4c6d2;-webkit-text-stroke:0.6px #c4c6d2;">STATUS</div>
<div class="t" style="left:2323.5px;top:850.9px;font-size:24.0px;color:#c4c6d2;-webkit-text-stroke:0.6px #c4c6d2;">LAST UPDATED</div>
<div class="t" style="left:2594.7px;top:850.9px;font-size:24.0px;color:#c4c6d2;-webkit-text-stroke:0.6px #c4c6d2;">ACTIONS</div>
<svg class="a" style="left:970.5px;top:856.0px" width="18.0" height="8.5" viewBox="0 0 18.0 8.5"><path d="M1.1,7.4 L9.0,1.1 L16.9,7.4" fill="none" stroke="#94979f" stroke-width="2.2" stroke-linecap="round" stroke-linejoin="round"/></svg>
<svg class="a" style="left:1251.0px;top:856.0px" width="14.5" height="9" viewBox="0 0 14.5 9"><path d="M1.1,1.1 L7.25,7.9 L13.4,1.1" fill="none" stroke="#94979f" stroke-width="2.2" stroke-linecap="round" stroke-linejoin="round"/></svg>
<div class="a" style="left:209px;top:902px;width:2523px;height:0;border-top:2px dashed #dfe0e5;"></div>
<div class="a" style="left:235.0px;top:942.0px;width:39.0px;height:39.0px;background:#f1f1f4;border-radius:10px;"></div>
<div class="t" style="left:311.7px;top:928.9px;font-size:27.3px;color:#071437;">Coordinate with terminal for</div>
<div class="t" style="left:311.7px;top:966.4px;font-size:27.3px;color:#071437;">berth availability</div>
<div class="t" style="left:790.7px;top:948.3px;font-size:26.6px;color:#071437;">Aydin Mammadov</div>
<div class="a" style="left:1445.5px;top:925.5px;width:322px;height:72px;border:2px dashed #c9cad2;border-radius:7px;"></div>
<svg class="a" style="left:1492.0px;top:948.5px" width="33" height="24" viewBox="0 0 33 24"><path d="M8,24 Q0,24 0,16 Q0,9 7,8 Q9,0 17,0 Q24,0 26,7 Q33,8 33,16 Q33,24 25,24 Z" fill="#7b7f99"/><path d="M16.5,6 L16.5,17 M11.5,12.5 L16.5,17.5 L21.5,12.5" fill="none" stroke="#fff" stroke-width="2.6"/></svg>
<div class="t" style="left:1524.3px;top:948.7px;font-size:25.8px;color:#71758f;">Add attachments</div>
<div class="a" style="left:2080px;top:927.5px;width:205px;height:68px;border:2px solid #d9dae1;border-radius:10px;"></div>
<div class="t" style="left:2099.6px;top:949.4px;font-size:25.4px;color:#474d66;">Done</div>
<svg class="a" style="left:2230.0px;top:956.0px" width="21.5" height="12.5" viewBox="0 0 21.5 12.5"><path d="M1.4,1.4 L10.75,11.1 L20.1,1.4" fill="none" stroke="#6b6f85" stroke-width="2.8" stroke-linecap="round" stroke-linejoin="round"/></svg>
<div class="t" style="left:2323.5px;top:928.4px;font-size:27.3px;color:#071437;">Chingiz</div>
<div class="t" style="left:2323.5px;top:966.2px;font-size:27.0px;color:#071437;">Maharramli</div>
<svg class="a" style="left:2562.0px;top:946.5px" width="31" height="31" viewBox="0 0 31 31"><g transform="translate(15.2,15.8) rotate(-45)"><path d="M-18.6,0 L-13.6,-2.4 L-13.6,2.4 Z" fill="#9a9db1"/><path d="M-13.6,-2 L-8.6,-5.4 L-8.6,5.4 L-13.6,2 Z" fill="#e1e2e8"/><rect x="-8.6" y="-5.4" width="16.8" height="10.8" fill="#9a9db1"/><rect x="8.9" y="-5.4" width="7.6" height="10.8" rx="2" fill="#dfe1e8"/></g></svg>
<svg class="a" style="left:2645.3px;top:947.9px" width="20.5" height="28" viewBox="0 0 20.5 28"><rect x="7" y="0" width="6.5" height="3" rx="1" fill="#d6d8df"/><rect x="0" y="1.9" width="20.5" height="3.3" rx="1.6" fill="#d6d8df"/><path d="M0.3,8.6 L20.2,8.6 L20.2,22.6 Q20.2,27.5 15.3,27.5 L5.2,27.5 Q0.3,27.5 0.3,22.6 Z" fill="#9a9db1"/></svg>
<div class="a" style="left:209px;top:1019px;width:2523px;height:0;border-top:2px dashed #dfe0e5;"></div>
<div class="a" style="left:235.0px;top:1059.0px;width:39.0px;height:39.0px;background:#f1f1f4;border-radius:10px;"></div>
<div class="t" style="left:311.7px;top:1064.7px;font-size:27.3px;color:#071437;">Coordinate with authorities</div>
<div class="t" style="left:790.7px;top:1065.3px;font-size:26.6px;color:#071437;">Aydin Mammadov</div>
<div class="a" style="left:1445.5px;top:1042.5px;width:322px;height:72px;border:2px dashed #c9cad2;border-radius:7px;"></div>
<svg class="a" style="left:1492.0px;top:1065.5px" width="33" height="24" viewBox="0 0 33 24"><path d="M8,24 Q0,24 0,16 Q0,9 7,8 Q9,0 17,0 Q24,0 26,7 Q33,8 33,16 Q33,24 25,24 Z" fill="#7b7f99"/><path d="M16.5,6 L16.5,17 M11.5,12.5 L16.5,17.5 L21.5,12.5" fill="none" stroke="#fff" stroke-width="2.6"/></svg>
<div class="t" style="left:1524.3px;top:1065.7px;font-size:25.8px;color:#71758f;">Add attachments</div>
<div class="a" style="left:2080px;top:1044.5px;width:205px;height:68px;border:2px solid #d9dae1;border-radius:10px;"></div>
<div class="t" style="left:2099.6px;top:1066.4px;font-size:25.4px;color:#474d66;">Done</div>
<svg class="a" style="left:2230.0px;top:1073.0px" width="21.5" height="12.5" viewBox="0 0 21.5 12.5"><path d="M1.4,1.4 L10.75,11.1 L20.1,1.4" fill="none" stroke="#6b6f85" stroke-width="2.8" stroke-linecap="round" stroke-linejoin="round"/></svg>
<div class="t" style="left:2323.5px;top:1045.4px;font-size:27.3px;color:#071437;">Chingiz</div>
<div class="t" style="left:2323.5px;top:1083.2px;font-size:27.0px;color:#071437;">Maharramli</div>
<svg class="a" style="left:2562.0px;top:1063.5px" width="31" height="31" viewBox="0 0 31 31"><g transform="translate(15.2,15.8) rotate(-45)"><path d="M-18.6,0 L-13.6,-2.4 L-13.6,2.4 Z" fill="#9a9db1"/><path d="M-13.6,-2 L-8.6,-5.4 L-8.6,5.4 L-13.6,2 Z" fill="#e1e2e8"/><rect x="-8.6" y="-5.4" width="16.8" height="10.8" fill="#9a9db1"/><rect x="8.9" y="-5.4" width="7.6" height="10.8" rx="2" fill="#dfe1e8"/></g></svg>
<svg class="a" style="left:2645.3px;top:1064.9px" width="20.5" height="28" viewBox="0 0 20.5 28"><rect x="7" y="0" width="6.5" height="3" rx="1" fill="#d6d8df"/><rect x="0" y="1.9" width="20.5" height="3.3" rx="1.6" fill="#d6d8df"/><path d="M0.3,8.6 L20.2,8.6 L20.2,22.6 Q20.2,27.5 15.3,27.5 L5.2,27.5 Q0.3,27.5 0.3,22.6 Z" fill="#9a9db1"/></svg>
<div class="a" style="left:209px;top:1136px;width:2523px;height:0;border-top:2px dashed #dfe0e5;"></div>
<div class="a" style="left:235.0px;top:1176.0px;width:39.0px;height:39.0px;background:#f1f1f4;border-radius:10px;"></div>
<div class="t" style="left:311.7px;top:1181.7px;font-size:27.3px;color:#071437;">Confirm vessel details</div>
<div class="t" style="left:790.7px;top:1182.3px;font-size:26.6px;color:#071437;">Chingiz Maharramli</div>
<div class="a" style="left:1445.5px;top:1159.5px;width:322px;height:72px;border:2px dashed #c9cad2;border-radius:7px;"></div>
<svg class="a" style="left:1492.0px;top:1182.5px" width="33" height="24" viewBox="0 0 33 24"><path d="M8,24 Q0,24 0,16 Q0,9 7,8 Q9,0 17,0 Q24,0 26,7 Q33,8 33,16 Q33,24 25,24 Z" fill="#7b7f99"/><path d="M16.5,6 L16.5,17 M11.5,12.5 L16.5,17.5 L21.5,12.5" fill="none" stroke="#fff" stroke-width="2.6"/></svg>
<div class="t" style="left:1524.3px;top:1182.7px;font-size:25.8px;color:#71758f;">Add attachments</div>
<div class="a" style="left:2080px;top:1161.5px;width:205px;height:68px;border:2px solid #d9dae1;border-radius:10px;"></div>
<div class="t" style="left:2099.6px;top:1183.4px;font-size:25.4px;color:#474d66;">Ongoing</div>
<svg class="a" style="left:2230.0px;top:1190.0px" width="21.5" height="12.5" viewBox="0 0 21.5 12.5"><path d="M1.4,1.4 L10.75,11.1 L20.1,1.4" fill="none" stroke="#6b6f85" stroke-width="2.8" stroke-linecap="round" stroke-linejoin="round"/></svg>
<div class="t" style="left:2323.5px;top:1162.4px;font-size:27.3px;color:#071437;">Chingiz</div>
<div class="t" style="left:2323.5px;top:1200.2px;font-size:27.0px;color:#071437;">Maharramli</div>
<svg class="a" style="left:2562.0px;top:1180.5px" width="31" height="31" viewBox="0 0 31 31"><g transform="translate(15.2,15.8) rotate(-45)"><path d="M-18.6,0 L-13.6,-2.4 L-13.6,2.4 Z" fill="#9a9db1"/><path d="M-13.6,-2 L-8.6,-5.4 L-8.6,5.4 L-13.6,2 Z" fill="#e1e2e8"/><rect x="-8.6" y="-5.4" width="16.8" height="10.8" fill="#9a9db1"/><rect x="8.9" y="-5.4" width="7.6" height="10.8" rx="2" fill="#dfe1e8"/></g></svg>
<svg class="a" style="left:2645.3px;top:1181.9px" width="20.5" height="28" viewBox="0 0 20.5 28"><rect x="7" y="0" width="6.5" height="3" rx="1" fill="#d6d8df"/><rect x="0" y="1.9" width="20.5" height="3.3" rx="1.6" fill="#d6d8df"/><path d="M0.3,8.6 L20.2,8.6 L20.2,22.6 Q20.2,27.5 15.3,27.5 L5.2,27.5 Q0.3,27.5 0.3,22.6 Z" fill="#9a9db1"/></svg>
<div class="a" style="left:209px;top:1253px;width:2523px;height:0;border-top:2px dashed #dfe0e5;"></div>
<div class="a" style="left:235.0px;top:1293.0px;width:39.0px;height:39.0px;background:#f1f1f4;border-radius:10px;"></div>
<div class="t" style="left:311.7px;top:1279.9px;font-size:27.3px;color:#071437;">Arrange Pilots, Tugs, and</div>
<div class="t" style="left:311.7px;top:1317.4px;font-size:27.3px;color:#071437;">Mooring</div>
<div class="t" style="left:790.7px;top:1299.3px;font-size:26.6px;color:#071437;">Chingiz Maharramli</div>
<div class="a" style="left:1445.5px;top:1276.5px;width:322px;height:72px;border:2px dashed #c9cad2;border-radius:7px;"></div>
<svg class="a" style="left:1492.0px;top:1299.5px" width="33" height="24" viewBox="0 0 33 24"><path d="M8,24 Q0,24 0,16 Q0,9 7,8 Q9,0 17,0 Q24,0 26,7 Q33,8 33,16 Q33,24 25,24 Z" fill="#7b7f99"/><path d="M16.5,6 L16.5,17 M11.5,12.5 L16.5,17.5 L21.5,12.5" fill="none" stroke="#fff" stroke-width="2.6"/></svg>
<div class="t" style="left:1524.3px;top:1299.7px;font-size:25.8px;color:#71758f;">Add attachments</div>
<div class="a" style="left:2080px;top:1278.5px;width:205px;height:68px;border:2px solid #d9dae1;border-radius:10px;"></div>
<div class="t" style="left:2099.6px;top:1300.4px;font-size:25.4px;color:#474d66;">Ongoing</div>
<svg class="a" style="left:2230.0px;top:1307.0px" width="21.5" height="12.5" viewBox="0 0 21.5 12.5"><path d="M1.4,1.4 L10.75,11.1 L20.1,1.4" fill="none" stroke="#6b6f85" stroke-width="2.8" stroke-linecap="round" stroke-linejoin="round"/></svg>
<div class="t" style="left:2323.5px;top:1279.4px;font-size:27.3px;color:#071437;">Chingiz</div>
<div class="t" style="left:2323.5px;top:1317.2px;font-size:27.0px;color:#071437;">Maharramli</div>
<svg class="a" style="left:2562.0px;top:1297.5px" width="31" height="31" viewBox="0 0 31 31"><g transform="translate(15.2,15.8) rotate(-45)"><path d="M-18.6,0 L-13.6,-2.4 L-13.6,2.4 Z" fill="#9a9db1"/><path d="M-13.6,-2 L-8.6,-5.4 L-8.6,5.4 L-13.6,2 Z" fill="#e1e2e8"/><rect x="-8.6" y="-5.4" width="16.8" height="10.8" fill="#9a9db1"/><rect x="8.9" y="-5.4" width="7.6" height="10.8" rx="2" fill="#dfe1e8"/></g></svg>
<svg class="a" style="left:2645.3px;top:1298.9px" width="20.5" height="28" viewBox="0 0 20.5 28"><rect x="7" y="0" width="6.5" height="3" rx="1" fill="#d6d8df"/><rect x="0" y="1.9" width="20.5" height="3.3" rx="1.6" fill="#d6d8df"/><path d="M0.3,8.6 L20.2,8.6 L20.2,22.6 Q20.2,27.5 15.3,27.5 L5.2,27.5 Q0.3,27.5 0.3,22.6 Z" fill="#9a9db1"/></svg>
<div class="a" style="left:209px;top:1370px;width:2523px;height:0;border-top:2px dashed #dfe0e5;"></div>
<div class="a" style="left:235.0px;top:1410.0px;width:39.0px;height:39.0px;background:#f1f1f4;border-radius:10px;"></div>
<div class="t" style="left:311.7px;top:1415.7px;font-size:27.3px;color:#071437;">Monitor cargo operations</div>
<div class="t" style="left:790.7px;top:1416.3px;font-size:26.6px;color:#071437;">Chingiz Maharramli</div>
<div class="a" style="left:1445.5px;top:1393.5px;width:322px;height:72px;border:2px dashed #c9cad2;border-radius:7px;"></div>
<svg class="a" style="left:1492.0px;top:1416.5px" width="33" height="24" viewBox="0 0 33 24"><path d="M8,24 Q0,24 0,16 Q0,9 7,8 Q9,0 17,0 Q24,0 26,7 Q33,8 33,16 Q33,24 25,24 Z" fill="#7b7f99"/><path d="M16.5,6 L16.5,17 M11.5,12.5 L16.5,17.5 L21.5,12.5" fill="none" stroke="#fff" stroke-width="2.6"/></svg>
<div class="t" style="left:1524.3px;top:1416.7px;font-size:25.8px;color:#71758f;">Add attachments</div>
<div class="a" style="left:2080px;top:1395.5px;width:205px;height:68px;border:2px solid #d9dae1;border-radius:10px;"></div>
<div class="t" style="left:2099.6px;top:1417.4px;font-size:25.4px;color:#474d66;">Ongoing</div>
<svg class="a" style="left:2230.0px;top:1424.0px" width="21.5" height="12.5" viewBox="0 0 21.5 12.5"><path d="M1.4,1.4 L10.75,11.1 L20.1,1.4" fill="none" stroke="#6b6f85" stroke-width="2.8" stroke-linecap="round" stroke-linejoin="round"/></svg>
<div class="t" style="left:2323.5px;top:1396.4px;font-size:27.3px;color:#071437;">Chingiz</div>
<div class="t" style="left:2323.5px;top:1434.2px;font-size:27.0px;color:#071437;">Maharramli</div>
<svg class="a" style="left:2562.0px;top:1414.5px" width="31" height="31" viewBox="0 0 31 31"><g transform="translate(15.2,15.8) rotate(-45)"><path d="M-18.6,0 L-13.6,-2.4 L-13.6,2.4 Z" fill="#9a9db1"/><path d="M-13.6,-2 L-8.6,-5.4 L-8.6,5.4 L-13.6,2 Z" fill="#e1e2e8"/><rect x="-8.6" y="-5.4" width="16.8" height="10.8" fill="#9a9db1"/><rect x="8.9" y="-5.4" width="7.6" height="10.8" rx="2" fill="#dfe1e8"/></g></svg>
<svg class="a" style="left:2645.3px;top:1415.9px" width="20.5" height="28" viewBox="0 0 20.5 28"><rect x="7" y="0" width="6.5" height="3" rx="1" fill="#d6d8df"/><rect x="0" y="1.9" width="20.5" height="3.3" rx="1.6" fill="#d6d8df"/><path d="M0.3,8.6 L20.2,8.6 L20.2,22.6 Q20.2,27.5 15.3,27.5 L5.2,27.5 Q0.3,27.5 0.3,22.6 Z" fill="#9a9db1"/></svg>
<div class="a" style="left:209px;top:1486.5px;width:2523px;height:0;border-top:2px dashed #dfe0e5;"></div>
<div class="a" style="left:235.0px;top:1526.5px;width:39.0px;height:39.0px;background:#f1f1f4;border-radius:10px;"></div>
<div class="t" style="left:311.7px;top:1532.2px;font-size:27.3px;color:#071437;">Send PDA</div>
<div class="t" style="left:790.7px;top:1532.8px;font-size:26.6px;color:#071437;">Katerina Maharramli</div>
<div class="a" style="left:1445.5px;top:1510.0px;width:322px;height:72px;border:2px dashed #c9cad2;border-radius:7px;"></div>
<svg class="a" style="left:1492.0px;top:1533.0px" width="33" height="24" viewBox="0 0 33 24"><path d="M8,24 Q0,24 0,16 Q0,9 7,8 Q9,0 17,0 Q24,0 26,7 Q33,8 33,16 Q33,24 25,24 Z" fill="#7b7f99"/><path d="M16.5,6 L16.5,17 M11.5,12.5 L16.5,17.5 L21.5,12.5" fill="none" stroke="#fff" stroke-width="2.6"/></svg>
<div class="t" style="left:1524.3px;top:1533.2px;font-size:25.8px;color:#71758f;">Add attachments</div>
<div class="a" style="left:2080px;top:1512.0px;width:205px;height:68px;border:2px solid #d9dae1;border-radius:10px;"></div>
<div class="t" style="left:2099.6px;top:1533.9px;font-size:25.4px;color:#474d66;">Ongoing</div>
<svg class="a" style="left:2230.0px;top:1540.5px" width="21.5" height="12.5" viewBox="0 0 21.5 12.5"><path d="M1.4,1.4 L10.75,11.1 L20.1,1.4" fill="none" stroke="#6b6f85" stroke-width="2.8" stroke-linecap="round" stroke-linejoin="round"/></svg>
<div class="t" style="left:2323.5px;top:1512.9px;font-size:27.3px;color:#071437;">Chingiz</div>
<div class="t" style="left:2323.5px;top:1550.7px;font-size:27.0px;color:#071437;">Maharramli</div>
<svg class="a" style="left:2562.0px;top:1531.0px" width="31" height="31" viewBox="0 0 31 31"><g transform="translate(15.2,15.8) rotate(-45)"><path d="M-18.6,0 L-13.6,-2.4 L-13.6,2.4 Z" fill="#9a9db1"/><path d="M-13.6,-2 L-8.6,-5.4 L-8.6,5.4 L-13.6,2 Z" fill="#e1e2e8"/><rect x="-8.6" y="-5.4" width="16.8" height="10.8" fill="#9a9db1"/><rect x="8.9" y="-5.4" width="7.6" height="10.8" rx="2" fill="#dfe1e8"/></g></svg>
<svg class="a" style="left:2645.3px;top:1532.4px" width="20.5" height="28" viewBox="0 0 20.5 28"><rect x="7" y="0" width="6.5" height="3" rx="1" fill="#d6d8df"/><rect x="0" y="1.9" width="20.5" height="3.3" rx="1.6" fill="#d6d8df"/><path d="M0.3,8.6 L20.2,8.6 L20.2,22.6 Q20.2,27.5 15.3,27.5 L5.2,27.5 Q0.3,27.5 0.3,22.6 Z" fill="#9a9db1"/></svg>
</body></html>
